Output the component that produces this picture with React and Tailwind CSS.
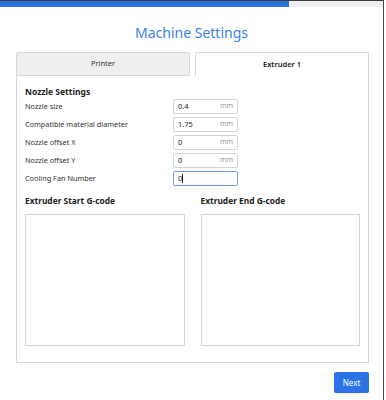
import React from "react";

const rows = [
  { label: "Nozzle size", value: "0.4", unit: "mm" },
  { label: "Compatible material diameter", value: "1.75", unit: "mm" },
  { label: "Nozzle offset X", value: "0", unit: "mm" },
  { label: "Nozzle offset Y", value: "0", unit: "mm" },
];

export default function App() {
  return (
    <div
      className="w-[386px] h-[400px] bg-white overflow-hidden"
      style={{ fontFamily: '"Noto Sans", "Open Sans", sans-serif' }}
    >
      <div className="w-[384px] h-[400px] flex flex-col border-r border-[#4a4a4a]">
        <div className="h-[7px] flex border-t border-[#3a3a3a]">
          <div className="w-[289px] bg-[#2a72e0]" />
          <div className="flex-1 bg-[#efeff1]" />
        </div>
        <div className="mt-[16px] h-[20px] leading-[20px] text-center text-[14px] text-[#3b82e4]">
          Machine Settings
        </div>
        <div className="mt-[9px] ml-[16px] w-[353px] flex gap-[5px] h-[24px]">
          <div className="w-[174px] h-[24px] bg-[#efefef] border border-[#d8d8d8] rounded-t-[2px] flex items-center justify-center text-[7.5px] text-[#333]">
            Printer
          </div>
          <div className="w-[174px] h-[24px] bg-white border border-b-0 border-[#d8d8d8] rounded-t-[2px] flex items-center justify-center text-[7.5px] font-semibold text-[#222]">
            Extruder 1
          </div>
        </div>
        <div className="ml-[16px] w-[353px] h-[287px] border border-t-0 border-[#d8d8d8] px-[8px] pt-[9px] pb-[16px] flex flex-col">
          <div className="h-[14px] leading-[14px] text-[8.5px] font-bold text-[#222]">Nozzle Settings</div>
          <div className="flex flex-col gap-[3px]">
            {rows.map((r) => (
              <div key={r.label} className="flex items-center h-[15px]">
                <div className="w-[148px] text-[7.3px] text-[#333]">{r.label}</div>
                <div className="w-[65px] h-[15px] border border-[#d4d4d4] rounded-[2px] flex items-center justify-between px-[4px]">
                  <span className="text-[7.5px] text-[#222]">{r.value}</span>
                  <span className="text-[7px] text-[#999]">{r.unit}</span>
                </div>
              </div>
            ))}
            <div className="flex items-center h-[15px]">
              <div className="w-[148px] text-[7.3px] text-[#333]">Cooling Fan Number</div>
              <div className="w-[65px] h-[15px] border border-[#6a9fec] rounded-[2px] flex items-center px-[4px]">
                <span className="text-[7.5px] text-[#222]">0</span>
                <span className="w-px h-[9px] bg-[#222]" />
              </div>
            </div>
          </div>
          <div className="mt-[8px] grid grid-cols-2 gap-x-[16px] flex-1">
            <div className="flex flex-col">
              <div className="h-[14px] leading-[14px] text-[8.4px] font-bold text-[#222]">Extruder Start G-code</div>
              <div className="mt-[6px] flex-1 border border-[#d6d6d6]" />
            </div>
            <div className="flex flex-col">
              <div className="h-[14px] leading-[14px] text-[8.4px] font-bold text-[#222]">Extruder End G-code</div>
              <div className="mt-[6px] flex-1 border border-[#d6d6d6]" />
            </div>
          </div>
        </div>
        <div className="mt-[9px] ml-[334px] w-[35px] h-[21px] bg-[#2a72e6] rounded-[2px] flex items-center justify-center text-[8px] text-white">
          Next
        </div>
      </div>
    </div>
  );
}
